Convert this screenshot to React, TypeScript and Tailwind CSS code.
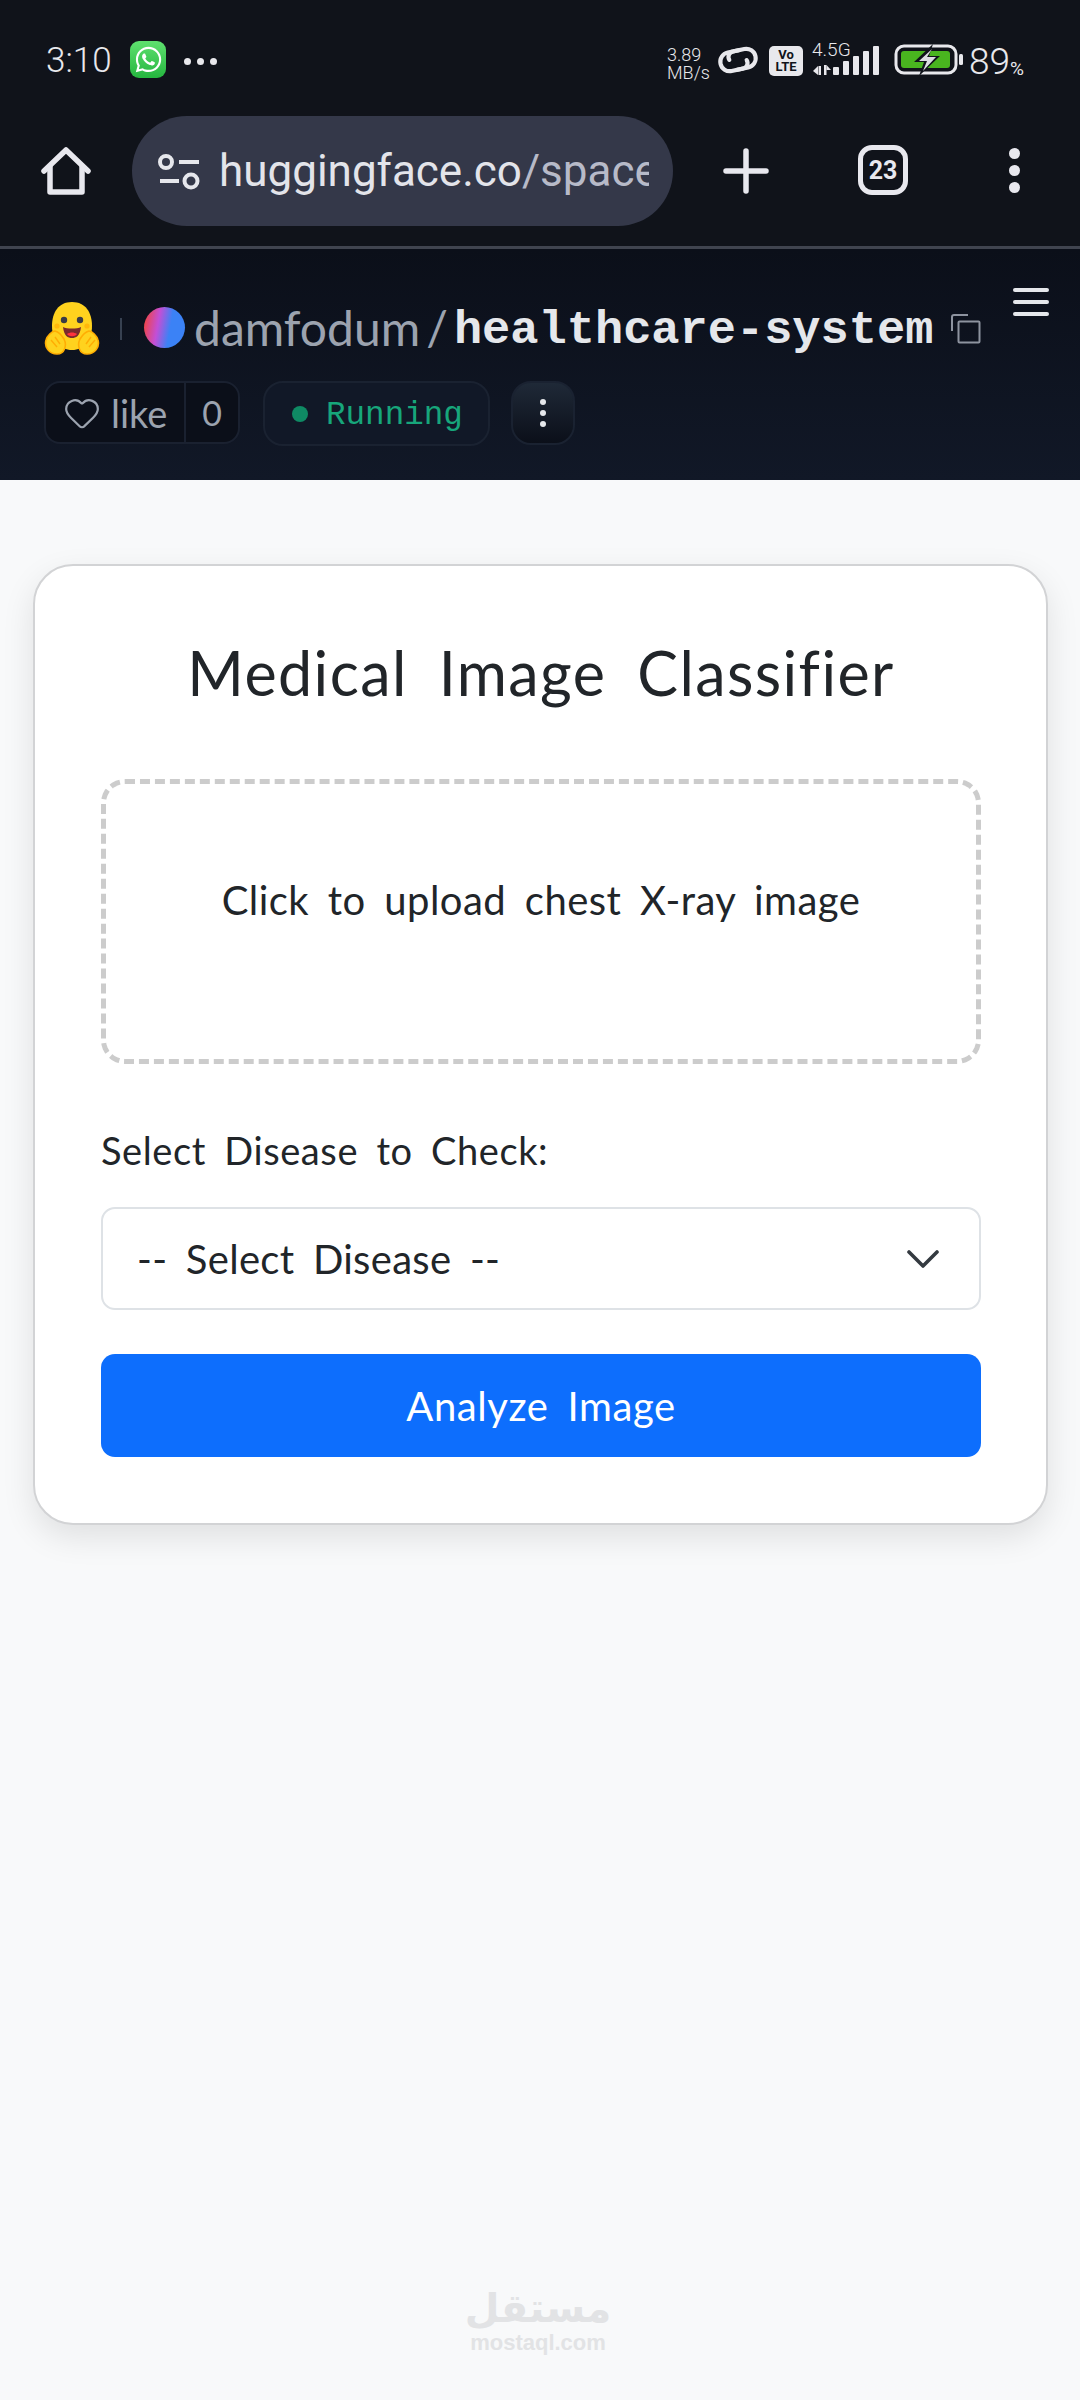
import { Heart } from "lucide-react";
import { FaWhatsapp } from "react-icons/fa";

function HomeIcon() {
  return (
    <svg width="52" height="52" viewBox="0 0 52 52" fill="none" stroke="#e8e8ee" strokeWidth="5.5" strokeLinecap="round" strokeLinejoin="round">
      <path d="M4 26 L26 5 L48 26" />
      <path d="M10 22 V47 H42 V22" />
    </svg>
  );
}

function TuneIcon() {
  return (
    <svg width="42" height="36" viewBox="0 0 42 36" fill="none" stroke="#e6e7ec" strokeWidth="4" strokeLinecap="butt">
      <circle cx="8" cy="8" r="6" />
      <path d="M21 8 H41" />
      <circle cx="33" cy="27" r="6.5" />
      <path d="M2 27 H21" />
    </svg>
  );
}

function LinkIcon() {
  return (
    <svg width="42" height="32" viewBox="0 0 44 34" fill="none" stroke="#e8e8ec" strokeWidth="4.4" strokeLinecap="round">
      <g transform="rotate(-12 22 17)">
        <path d="M25 7 H13 a10 10 0 0 0 0 20 H25 a6 6 0 0 0 6 -8" />
        <path d="M19 27 H31 a10 10 0 0 0 0 -20 H19 a6 6 0 0 0 -6 8" />
      </g>
    </svg>
  );
}

function SignalBars() {
  return (
    <svg width="68" height="30" viewBox="0 0 68 30" fill="#e8e8ec">
      <path d="M6 20 V29 L1 25 Z" />
      <rect x="6.5" y="20" width="2.5" height="9" />
      <rect x="12" y="19" width="2.5" height="10" />
      <path d="M14.5 19 L19 24 H14.5 Z" />
      <rect x="21" y="21" width="6" height="8" rx="1" />
      <rect x="31" y="15" width="6" height="14" rx="1" />
      <rect x="41" y="10" width="6" height="19" rx="1" />
      <rect x="51" y="5" width="6" height="24" rx="1" />
      <rect x="61" y="0" width="6" height="29" rx="1" />
    </svg>
  );
}

function Battery() {
  return (
    <svg width="70" height="32" viewBox="0 0 70 32" fill="none">
      <rect x="2" y="2" width="60" height="27" rx="8" stroke="#e8e8ec" strokeWidth="3" />
      <rect x="7" y="7" width="49" height="17" rx="3" fill="#49b51f" />
      <path d="M39 0 L20 18 H30 L25 32 L46 12 H35 Z" fill="#10131a" />
      <path d="M38 5 L25 17 H33 L29 27 L42 13 H33 Z" fill="#dcdde2" />
      <rect x="65" y="10" width="4" height="11" rx="1.5" fill="#e8e8ec" />
    </svg>
  );
}

function HuggingFace() {
  return (
    <svg width="56" height="56" viewBox="0 0 56 56">
      <path d="M28 2 C42 2 48 13 48 26 C48 40 40 50 28 50 C16 50 8 40 8 26 C8 13 14 2 28 2 Z" fill="#ffd21e" />
      <circle cx="20" cy="20" r="3.2" fill="#3a3b45" />
      <circle cx="36" cy="20" r="3.2" fill="#3a3b45" />
      <circle cx="13" cy="26" r="2.6" fill="#ffad03" opacity="0.7" />
      <circle cx="43" cy="26" r="2.6" fill="#ffad03" opacity="0.7" />
      <path d="M19 27 C23 29 33 29 37 27 C36 36 32 38 28 38 C24 38 20 36 19 27 Z" fill="#7a2a2d" />
      <path d="M23 34 C26 32 30 32 33 34 C31 37 25 37 23 34 Z" fill="#ff323d" />
      <path d="M2 40 C3 36 8 31 11 31 C15 32 17 34 20 39 C23 45 21 54 13 54 C5 54 0 47 2 40 Z" fill="#ffd21e" stroke="#ffad03" strokeWidth="1.6" />
      <path d="M54 40 C53 36 48 31 45 31 C41 32 39 34 36 39 C33 45 35 54 43 54 C51 54 56 47 54 40 Z" fill="#ffd21e" stroke="#ffad03" strokeWidth="1.6" />
      <path d="M7 40 L13 47 M11 37 L16 44 M47 37 L42 44 M51 40 L45 47" stroke="#ffad03" strokeWidth="1.4" fill="none" />
    </svg>
  );
}

function CopyIcon() {
  return (
    <svg width="30" height="30" viewBox="0 0 30 30" fill="none" stroke="#8d939f" strokeWidth="2">
      <path d="M1 17 V3 Q1 1 3 1 H17" />
      <rect x="7.5" y="7.5" width="21" height="21" rx="1" />
    </svg>
  );
}

function Chevron() {
  return (
    <svg width="32" height="20" viewBox="0 0 32 20" fill="none" stroke="#343a40" strokeWidth="3.6" strokeLinecap="round" strokeLinejoin="round">
      <path d="M2 3 L16 17 L30 3" />
    </svg>
  );
}

export default function App() {
  return (
    <div className="relative flex min-h-[2400px] w-[1080px] flex-col bg-[#f8f9fa]">
      <div className="bg-[#10131a]">
        <div className="flex h-[116px] items-start pl-[46px] pr-[56px] pt-[41px]">
          <span className="h-[38px] w-[84px] text-[35px] leading-[40px] text-[#e8e8ec] font-light [font-family:Roboto,sans-serif]">3:10</span>
          <span className="flex h-[37px] w-[36px] items-center justify-center rounded-[9px] bg-[linear-gradient(180deg,#5fe06f,#25b63f)] text-white">
            <FaWhatsapp size={29} />
          </span>
          <span className="ml-[18px] mt-[17px] flex gap-[6px]">
            <i className="h-[7px] w-[7px] rounded-full bg-[#e8e8ec]" />
            <i className="h-[7px] w-[7px] rounded-full bg-[#e8e8ec]" />
            <i className="h-[7px] w-[7px] rounded-full bg-[#e8e8ec]" />
          </span>
          <div className="ml-auto flex items-start [font-family:Roboto,sans-serif] text-[#e8e8ec]">
            <div className="mt-[5px] flex w-[50px] flex-col text-[18px] leading-[18px] font-light">
              <span>3.89</span>
              <span>MB/s</span>
            </div>
            <span className="mt-[3px]"><LinkIcon /></span>
            <div className="ml-[10px] mt-[5px] flex h-[30px] w-[34px] flex-col items-center justify-center rounded-[5px] bg-[#e8e8ec] text-[13px] font-bold leading-[12px] text-[#10131a]">
              <span>Vo</span>
              <span>LTE</span>
            </div>
            <div className="relative ml-[9px] mt-[5px] h-[30px] w-[68px]">
              <span className="absolute left-0 top-[-5px] text-[19px] font-light leading-[18px]">4.5G</span>
              <SignalBars />
            </div>
            <span className="ml-[14px] mt-[3px]"><Battery /></span>
            <span className="ml-[5px] mt-[1px] text-[37px] font-light leading-[40px]">89</span>
            <span className="mt-[16px] text-[19px] leading-[24px]">%</span>
          </div>
        </div>
        <div className="flex h-[130px] items-start">
          <span className="ml-[40px] mt-[29px]"><HomeIcon /></span>
          <div className="ml-[40px] flex h-[110px] w-[541px] items-center overflow-hidden rounded-[55px] bg-[#343849] pl-[26px]">
            <span className="mt-[2px] shrink-0"><TuneIcon /></span>
            <span className="ml-[19px] w-[430px] overflow-hidden whitespace-nowrap text-[44px] leading-[56px] text-[#e3e4ea] [font-family:Roboto,sans-serif]">
              huggingface.co<span className="text-[#b7bac8]">/spaces</span>
            </span>
          </div>
          <svg className="ml-[50px] mt-[32px]" width="46" height="46" viewBox="0 0 46 46" stroke="#e8e8ee" strokeWidth="5.5" strokeLinecap="round">
            <path d="M23 3 V43 M3 23 H43" />
          </svg>
          <div className="ml-[89px] mt-[29px] flex h-[50px] w-[50px] items-center justify-center rounded-[14px] border-[5px] border-[#e8e8ee] text-[25px] font-bold leading-none text-[#e8e8ee] [font-family:Roboto,sans-serif]">
            23
          </div>
          <div className="ml-[101px] mt-[32px] flex flex-col gap-[6px]">
            <i className="h-[11px] w-[11px] rounded-full bg-[#e8e8ee]" />
            <i className="h-[11px] w-[11px] rounded-full bg-[#e8e8ee]" />
            <i className="h-[11px] w-[11px] rounded-full bg-[#e8e8ee]" />
          </div>
        </div>
        <div className="h-[3px] bg-[#40444f]" />
      </div>

      <div className="relative h-[231px] bg-[linear-gradient(180deg,#0b0f19,#111827)] pl-[44px]">
        <div className="flex h-[132px] items-start pt-[51px]">
          <HuggingFace />
          <span className="ml-[20px] mt-[18px] h-[22px] w-[2px] bg-[#374151]" />
          <span className="ml-[22px] mt-[7px] h-[41px] w-[41px] rounded-full bg-[linear-gradient(100deg,#ef4444_5%,#c34fd6_35%,#3b82f6_62%)]" />
          <span className="ml-[9px] text-[48px] leading-[56px] text-[#9ca3af] [font-family:Lato,sans-serif]">damfodum</span>
          <span className="ml-[6px] text-[48px] leading-[56px] text-[#9ca3af] [font-family:Lato,sans-serif]">/</span>
          <span className="ml-[6px] mt-[3px] text-[47px] font-bold leading-[56px] text-[#e5e7eb] [font-family:'Liberation_Mono',monospace]">healthcare-system</span>
          <span className="ml-[18px] mt-[14px]"><CopyIcon /></span>
        </div>
        <div className="flex items-stretch">
          <div className="flex h-[63px] w-[196px] items-center rounded-[16px] border-2 border-[#1a2130] bg-[#0b0f19]">
            <Heart size={38} strokeWidth={1.4} color="#9ca3af" className="ml-[17px]" />
            <span className="ml-[10px] text-[38px] leading-[44px] text-[#9ca3af] [font-family:Lato,sans-serif]">like</span>
            <span className="ml-auto flex h-full w-[54px] items-center justify-center border-l-2 border-[#1a2130] text-[34px] text-[#9ca3af] [font-family:Lato,sans-serif]">0</span>
          </div>
          <div className="ml-[23px] flex h-[65px] w-[227px] items-center rounded-[20px] border-2 border-[#1a2231] bg-[#111827] pl-[27px]">
            <span className="h-[16px] w-[16px] rounded-full bg-[#0f8a64]" />
            <span className="ml-[18px] mt-[4px] text-[32.6px] leading-[40px] text-[#17a67b] [font-family:'Liberation_Mono',monospace]">Running</span>
          </div>
          <div className="ml-[21px] flex h-[64px] w-[64px] flex-col items-center justify-center gap-[5px] rounded-[20px] border-2 border-[#1a2231] bg-[linear-gradient(180deg,#1f2937,#0b0f19)]">
            <i className="h-[6px] w-[6px] rounded-full bg-[#e5e7eb]" />
            <i className="h-[6px] w-[6px] rounded-full bg-[#e5e7eb]" />
            <i className="h-[6px] w-[6px] rounded-full bg-[#e5e7eb]" />
          </div>
        </div>
        <div className="absolute right-[31px] top-[39px] flex w-[36px] flex-col gap-[8px]">
          <i className="h-[4px] rounded-full bg-[#e5e7eb]" />
          <i className="h-[4px] rounded-full bg-[#e5e7eb]" />
          <i className="h-[4px] rounded-full bg-[#e5e7eb]" />
        </div>
      </div>

      <main className="px-[33px] pt-[84px] [font-family:Lato,sans-serif] text-[#212529]">
        <div className="flex h-[961px] w-[1015px] flex-col rounded-[40px] border-2 border-[#d2d3d5] bg-white pl-[66px] pr-[65px] shadow-[0_12px_32px_rgba(0,0,0,0.1)]">
          <h1 className="mt-[71px] text-center text-[61px] leading-[72px] tracking-[1.4px] [word-spacing:14px]">Medical Image Classifier</h1>
          <div className="mt-[70px] flex h-[285px] items-center justify-center rounded-[24px] border-[5px] border-dashed border-[#cccccc] pb-[44px] text-[40px] tracking-[0.45px] [word-spacing:8px]">
            Click to upload chest X-ray image
          </div>
          <label className="mt-[63px] text-[38px] leading-[46px] tracking-[0.6px] [word-spacing:8px]">Select Disease to Check:</label>
          <div className="mt-[34px] flex h-[103px] items-center justify-between rounded-[14px] border-2 border-[#dee2e6] pl-[34px] pr-[40px]">
            <span className="text-[40px] leading-[50px] tracking-[0.3px] [word-spacing:8px]">-- Select Disease --</span>
            <Chevron />
          </div>
          <button className="mt-[44px] h-[103px] rounded-[14px] bg-[#0d6efd] text-center text-[40px] leading-[50px] tracking-[0.6px] text-white [word-spacing:8px]">Analyze Image</button>
        </div>
      </main>

      <div className="absolute left-[471px] top-[2284px] flex w-[134px] flex-col items-center text-[#e2e3e5]">
        <span className="text-[40px] font-bold leading-[48px] [font-family:'DejaVu_Sans',sans-serif]">مستقل</span>
        <span className="text-[22px] font-bold leading-[22px] [font-family:'Liberation_Sans',sans-serif]">mostaql.com</span>
      </div>
    </div>
  );
}
